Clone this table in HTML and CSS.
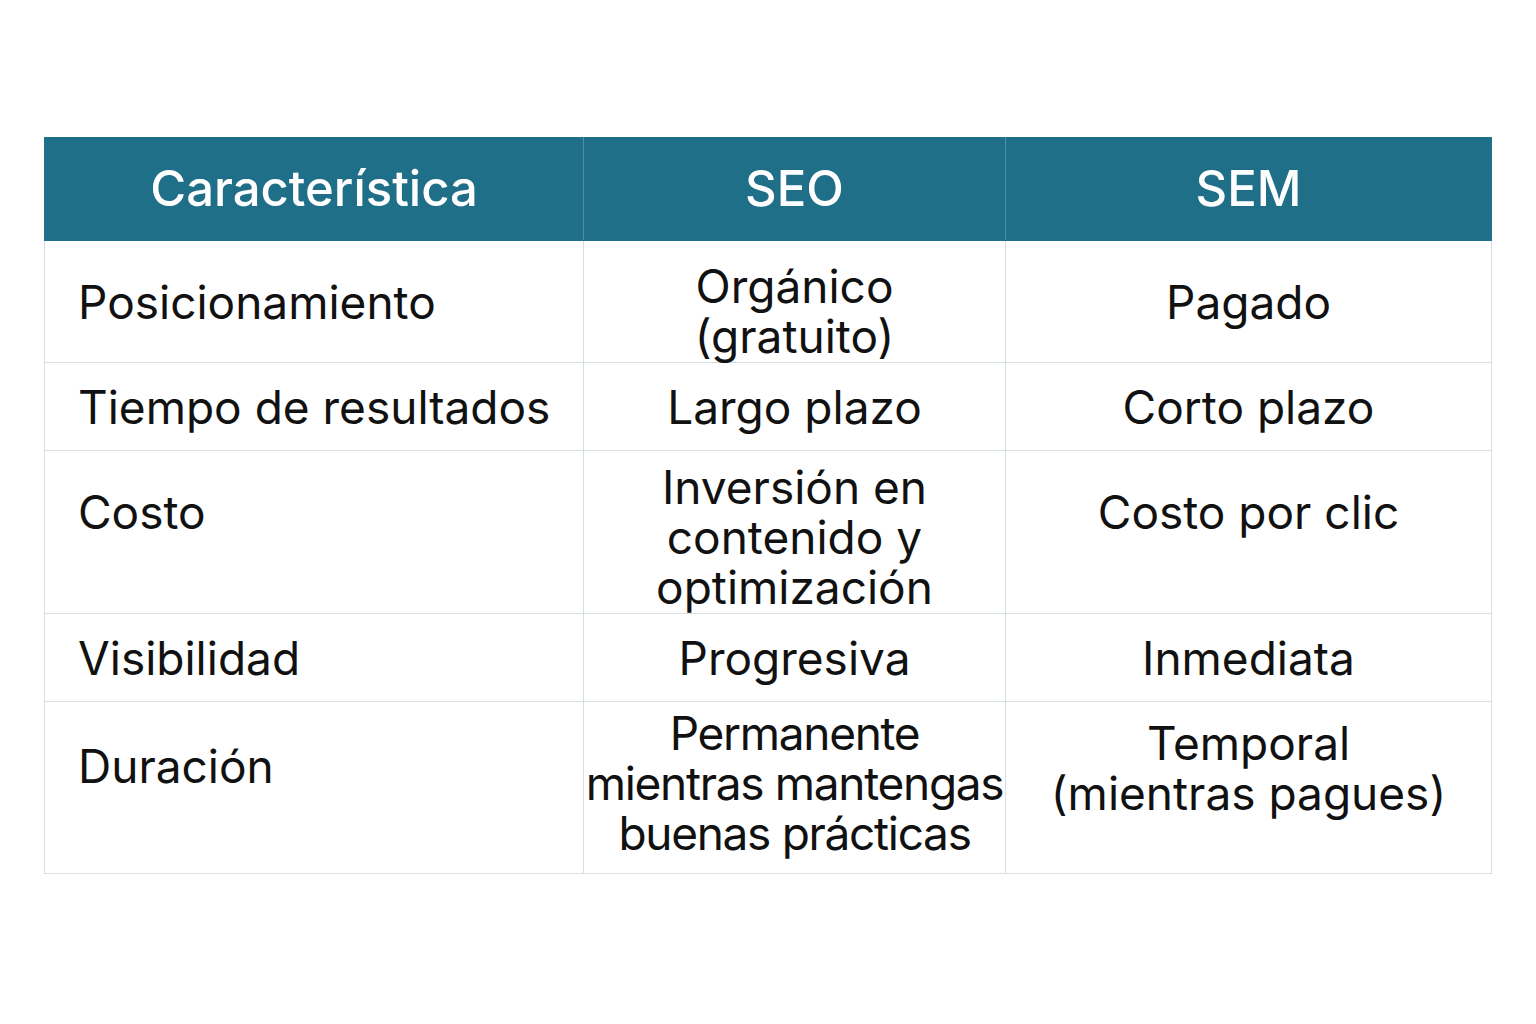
FILE: index.html
```html
<!DOCTYPE html>
<html lang="es">
<head>
<meta charset="utf-8">
<title>SEO vs SEM</title>
<link rel="stylesheet" href="styles.css">
</head>
<body>
<main class="page">
  <table class="cmp">
    <colgroup>
      <col class="c1"><col class="c2"><col class="c3">
    </colgroup>
    <thead>
      <tr class="head">
        <th>Característica</th>
        <th>SEO</th>
        <th>SEM</th>
      </tr>
    </thead>
    <tbody>
      <tr class="r1">
        <td class="lab">Posicionamiento</td>
        <td class="down">Orgánico<br>(gratuito)</td>
        <td>Pagado</td>
      </tr>
      <tr class="r2">
        <td class="lab">Tiempo de resultados</td>
        <td>Largo plazo</td>
        <td>Corto plazo</td>
      </tr>
      <tr class="r3">
        <td class="lab up">Costo</td>
        <td class="down3">Inversión en<br>contenido y<br>optimización</td>
        <td class="up">Costo por clic</td>
      </tr>
      <tr class="r4">
        <td class="lab">Visibilidad</td>
        <td>Progresiva</td>
        <td>Inmediata</td>
      </tr>
      <tr class="r5">
        <td class="lab up">Duración</td>
        <td class="tight">Permanente<br>mientras mantengas<br>buenas prácticas</td>
        <td class="up">Temporal<br>(mientras pagues)</td>
      </tr>
    </tbody>
  </table>
</main>
</body>
</html>
```

FILE: styles.css
```css
html, body {
  margin: 0;
  padding: 0;
  background: #ffffff;
}
body {
  font-family: "Inter", "Noto Sans", "Liberation Sans", sans-serif;
  color: #111111;
}
.page {
  padding: 137px 0 0 44px;
}
.cmp {
  border-collapse: collapse;
  table-layout: fixed;
  width: 1447px;
}
.c1 { width: 539px; }
.c2 { width: 422px; }
.c3 { width: 486px; }
.cmp th, .cmp td {
  border: 1px solid #d6dfe2;
  text-align: center;
  vertical-align: middle;
  padding: 0;
  font-size: 46px;
  line-height: 50px;
  font-weight: 400;
}
.head { height: 103px; }
.head th {
  background: #1f6f88;
  color: #ffffff;
  font-weight: 500;
  font-size: 49px;
  border-color: #4f8ea1;
  border-top-color: #1f6f88;
  border-bottom-color: #1f6f88;
}
.head th:first-child { border-left-color: #1f6f88; }
.head th:last-child { border-right-color: #1f6f88; }
.cmp td.lab {
  text-align: left;
  padding-left: 33px;
}
.r1 { height: 122px; }
.r2 { height: 88px; }
.r3 { height: 163px; }
.r4 { height: 88px; }
.r5 { height: 172px; }
.cmp td.up { padding-bottom: 40px; }
.r5 td.lab.up { padding-bottom: 44px; }
.cmp td.down { padding-top: 18px; }
.cmp td.down3 { padding-top: 10px; }
.cmp td.tight { letter-spacing: -1.3px; padding-bottom: 10px; }
```
